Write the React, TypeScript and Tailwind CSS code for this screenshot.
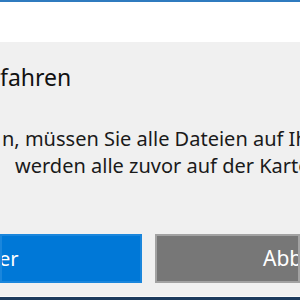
const font = { fontFamily: '"Noto Sans", sans-serif' };

export default function App() {
  return (
    <div className="w-[300px] h-[300px] overflow-hidden bg-[#f0f0f0] flex flex-col items-start text-left text-black">
      <div className="w-[300px] h-[2px] bg-[#2f7bbf] shrink-0" />
      <div className="w-[300px] h-[40px] bg-white shrink-0" />
      <div className="w-[300px] mt-[19px] flex justify-start overflow-hidden">
        <span className="text-[23px] leading-[32px] whitespace-nowrap text-[#111]" style={font}>fahren</span>
      </div>
      <div className="w-[300px] mt-[32px] flex flex-col items-start overflow-hidden text-[20px] leading-[27px] text-[#1a1a1a]">
        <span className="whitespace-nowrap pl-[2px]" style={font}>n, müssen Sie alle Dateien auf Ihrer</span>
        <span className="whitespace-nowrap pl-[15px]" style={font}>werden alle zuvor auf der Karte gespeicherten</span>
      </div>
      <div className="w-[300px] mt-[55px] flex gap-[13px] h-[49px] shrink-0">
        <div className="w-[142px] shrink-0 bg-[#0078d7] border-2 border-[#1a86dc] flex items-center text-white text-[20px] whitespace-nowrap overflow-hidden">
          <span className="-ml-[3px]" style={font}>er</span>
        </div>
        <div className="flex-1 bg-[#777777] border-2 border-[#a2a2a2] flex items-center text-white text-[21px] whitespace-nowrap overflow-hidden">
          <span className="pl-[106px]" style={font}>Abbrechen</span>
        </div>
      </div>
      <div className="flex-1" />
      <div className="w-[300px] h-[1px] bg-[#fafafa] shrink-0" />
      <div className="w-[300px] h-[3px] bg-[#1c3a5c] shrink-0" />
    </div>
  );
}
